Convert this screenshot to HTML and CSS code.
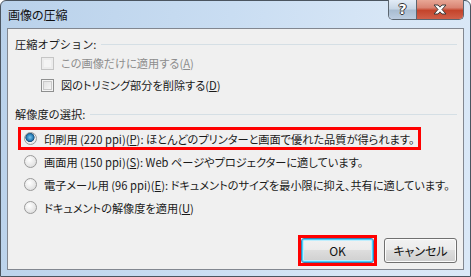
FILE: index.html
```html
<!DOCTYPE html>
<html>
<head>
  <title>画像の圧縮</title>
  <meta charset="UTF-8">
  <link rel="stylesheet" href="styles.css">
</head>
<body>
  <div class="window">
    <div class="titlebar">
      <span class="title">画像の圧縮</span>
      <div class="caption-buttons">
        <span class="help-button">?</span>
        <span class="close-button">
          <svg width="18" height="11" viewBox="0 0 18 11">
            <path d="M3 1h4l2 2.2L11 1h4l-4 4.5L15 10h-4L9 7.8 7 10H3l4-4.5z" fill="#fff" stroke="#3b3b3b" stroke-width="1"/>
          </svg>
        </span>
      </div>
    </div>
    <div class="client">
      <div class="group-header"><span>圧縮オプション:</span><span class="rule"></span></div>
      <div class="option disabled"><span class="checkbox"></span><span>この画像だけに適用する(<u>A</u>)</span></div>
      <div class="option"><span class="checkbox"></span><span>図のトリミング部分を削除する(<u>D</u>)</span></div>
      <div class="group-header second"><span>解像度の選択:</span><span class="rule"></span></div>
      <div class="radios">
        <div class="radio-row highlighted"><span class="radio checked"></span><span>印刷用 (220 ppi)(<u>P</u>): ほとんどのプリンターと画面で優れた品質が得られます。</span></div>
        <div class="radio-row"><span class="radio"></span><span>画面用 (150 ppi)(<u>S</u>): Web ページやプロジェクターに適しています。</span></div>
        <div class="radio-row"><span class="radio"></span><span>電子メール用 (96 ppi)(<u>E</u>): ドキュメントのサイズを最小限に抑え、共有に適しています。</span></div>
        <div class="radio-row"><span class="radio"></span><span>ドキュメントの解像度を適用(<u>U</u>)</span></div>
      </div>
      <div class="button-row">
        <div class="highlight-box"><button class="push-button default">OK</button></div>
        <button class="push-button">キャンセル</button>
      </div>
    </div>
  </div>
</body>
</html>
```
FILE: styles.css
```css
body {
  margin: 0;
  background: #ffffff;
  font-family: "Noto Sans CJK JP", "Noto Sans", sans-serif;
  font-size: 11.2px;
  color: #1a1a1a;
}
.window {
  box-sizing: border-box;
  width: 471px;
  height: 277px;
  border: 1px solid #4b5560;
  border-radius: 6px 6px 0 0;
  background: linear-gradient(100deg, #b9d1ea 0%, #c9ddf2 45%, #d7e6f6 75%, #dae8f7 100%);
  display: flex;
  flex-direction: column;
}
.titlebar {
  height: 27px;
  display: flex;
  align-items: flex-start;
  padding-left: 7px;
}
.title {
  margin-top: 5px;
  line-height: 18px;
  font-size: 12px;
  color: #111;
  font-feature-settings: "palt";
}
.caption-buttons {
  margin-left: auto;
  margin-right: 6px;
  margin-top: -1px;
  display: flex;
  border: 1px solid #5c6670;
  border-top: none;
  border-radius: 0 0 5px 5px;
  overflow: hidden;
  height: 19px;
}
.help-button {
  width: 27px;
  height: 19px;
  background: linear-gradient(#e3ecf6 0%, #c8d6e5 45%, #a9bdd1 55%, #bccde0 100%);
  border-right: 1px solid #5c6670;
  color: #fff;
  font: bold 14px "DejaVu Sans", sans-serif;
  text-align: center;
  line-height: 18px;
  text-shadow: 1px 0 #333, -1px 0 #333, 0 1px #333, 0 -1px #333;
}
.close-button {
  width: 46px;
  height: 19px;
  background: linear-gradient(#e8a796 0%, #d98473 40%, #c4442b 55%, #d0604a 100%);
  display: flex;
  align-items: center;
  justify-content: center;
}
.client {
  flex: 1;
  margin: 0 6px 6px 6px;
  border: 1px solid #828790;
  background: #f0f0f0;
  display: flex;
  flex-direction: column;
  padding: 7px 6px 3px 7px;
  white-space: nowrap;
}
.group-header {
  display: flex;
  align-items: center;
  line-height: 16px;
  height: 16px;
}
.group-header .rule {
  flex: 1;
  height: 1px;
  background: #d5dfe5;
  margin-left: 5px;
  margin-top: 1px;
}
.group-header.second {
  margin-top: 10px;
}
.option {
  display: flex;
  align-items: center;
  height: 22px;
  padding-left: 26px;
  gap: 7px;
  font-feature-settings: "palt";
}
.option:first-of-type {
  margin-top: 5px;
}
.option.disabled {
  color: #8d8d8d;
}
.checkbox {
  box-sizing: border-box;
  width: 13px;
  height: 13px;
  border: 1px solid #8e8f8f;
  background: linear-gradient(135deg, #dcdcdc, #fbfbfb);
  box-shadow: inset 0 0 0 1px #f4f4f4, inset 0 0 0 2px #c9c9c9;
}
.option.disabled .checkbox {
  border-color: #c5c5c5;
  background: #f4f4f4;
  box-shadow: inset 0 0 0 2px #ececec;
}
.radios {
  margin-top: 5px;
  margin-left: 3px;
  display: flex;
  flex-direction: column;
}
.radio-row {
  display: flex;
  align-items: center;
  width: fit-content;
  height: 17px;
  border: 3px solid transparent;
  padding: 0 4px 0 3px;
  gap: 7px;
  font-feature-settings: "palt";
}
.radio-row.highlighted {
  border-color: #ff0000;
}
.radio {
  box-sizing: border-box;
  width: 13px;
  height: 13px;
  border-radius: 50%;
  border: 1px solid #9a9a9a;
  background: radial-gradient(circle at 40% 35%, #ffffff 0%, #e2e2e2 70%, #cfcfcf 100%);
}
.radio.checked {
  background: radial-gradient(circle at 45% 40%, #7cc7f0 0%, #2b80b8 35%, #1a4f7a 48%, #f2f2f2 55%, #d8d8d8 100%);
}
.button-row {
  margin-top: auto;
  display: flex;
  justify-content: flex-end;
  align-items: center;
  gap: 7px;
}
.highlight-box {
  border: 3px solid #ff0000;
  display: flex;
}
.push-button {
  box-sizing: border-box;
  width: 73px;
  height: 25px;
  border: 1px solid #707070;
  border-radius: 3px;
  background: linear-gradient(#f2f2f2 0%, #ebebeb 49%, #dddddd 50%, #cfcfcf 100%);
  font-family: "Noto Sans CJK JP", sans-serif;
  font-size: 12px;
  color: #111;
  padding: 0;
  font-feature-settings: "palt";
  box-shadow: inset 0 0 0 1px #fcfcfc;
}
.push-button.default {
  border-color: #3c7fb1;
  box-shadow: inset 0 0 0 1px #48d1fd, inset 0 0 0 2px #bfeefd;
}
```
